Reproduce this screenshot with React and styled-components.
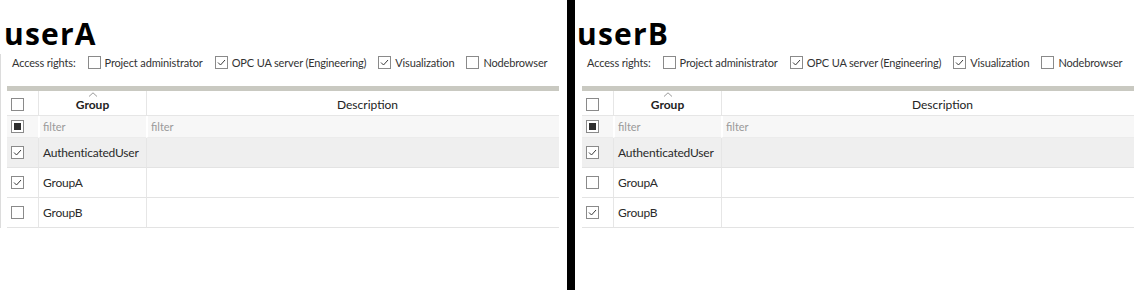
import React from "react";
import styled, { createGlobalStyle } from "styled-components";

const GlobalStyle = createGlobalStyle`
  html, body { margin: 0; padding: 0; background: #fff; }
  body { font-family: Lato, "Noto Sans", sans-serif; color: #333; }
`;

const Page = styled.div`
  display: flex;
  width: 1140px;
  height: 290px;
  background: #fff;
  overflow: hidden;
`;

const Panel = styled.section`
  flex: 0 0 ${(p) => p.$width}px;
  display: flex;
  flex-direction: column;
  box-sizing: border-box;
  min-width: 0;
`;

const Divider = styled.div`
  flex: 0 0 8px;
  background: #000;
`;

const Title = styled.h1`
  margin: 19px 0 0 ${(p) => p.$indent}px;
  height: 30px;
  font-family: "Open Sans", "Noto Sans", sans-serif;
  font-weight: 700;
  font-size: 30px;
  line-height: 30px;
  color: #000;
  letter-spacing: 1.2px;
  white-space: nowrap;
`;

const Body = styled.div`
  margin-top: 5px;
  padding-left: 6px;
  height: 174px;
  border-left: ${(p) => (p.$edge ? "1px solid #dcdcdc" : "none")};
  margin-left: ${(p) => (p.$edge ? 0 : 1)}px;
`;

const AccessRow = styled.div`
  display: flex;
  align-items: center;
  height: 17px;
  padding-left: 5px;
  font-size: 11px;
  letter-spacing: -0.15px;
  color: #333;
  white-space: nowrap;
`;

const AccessLabel = styled.span`
  margin-right: 12px;
  flex: 0 0 auto;
`;

const Option = styled.label`
  display: flex;
  align-items: center;
  gap: 4px;
  margin-right: 12px;
  flex: 0 0 auto;
  white-space: nowrap;
`;

const Box = styled.span`
  position: relative;
  display: inline-flex;
  align-items: center;
  justify-content: center;
  width: 13px;
  height: 13px;
  box-sizing: border-box;
  border: 1px solid #8a8a8a;
  background: #fff;
  flex: 0 0 auto;
`;

const Indeterminate = styled.span`
  width: 7px;
  height: 7px;
  background: #2e2e2e;
`;

function Checkbox({ state }) {
  return (
    <Box>
      {state === "checked" && (
        <svg width="11" height="11" viewBox="0 0 11 11">
          <polyline points="2,5.5 4.5,8 9,3" fill="none" stroke="#3a3a3a" strokeWidth="1" />
        </svg>
      )}
      {state === "mixed" && <Indeterminate />}
    </Box>
  );
}

const Table = styled.div`
  margin-top: 15px;
  width: 552px;
  border-top: 5px solid #c9c9c1;
  display: grid;
  grid-template-columns: 31px 108px 1fr;
  font-size: 12px;
`;

const HeadCell = styled.div`
  position: relative;
  height: 25px;
  box-sizing: border-box;
  display: flex;
  align-items: center;
  justify-content: ${(p) => (p.$center ? "center" : "flex-start")};
  padding-left: ${(p) => p.$pl || 0}px;
  border-bottom: 1px solid #e6e6e6;
  border-left: ${(p) => (p.$first ? "none" : "1px solid #e6e6e6")};
  font-weight: ${(p) => (p.$bold ? 700 : 400)};
  color: #222;
  padding-top: 3px;
  line-height: 14px;
  white-space: nowrap;
`;

const SortCaret = styled.svg`
  position: absolute;
  top: 1px;
  left: 50%;
  transform: translateX(-50%);
`;

const FilterCell = styled.div`
  height: 22px;
  box-sizing: border-box;
  display: flex;
  align-items: center;
  padding-left: ${(p) => p.$pl || 0}px;
  background: #f7f7f7;
  border-left: ${(p) => (p.$first ? "none" : "2px solid #fff")};
  border-bottom: 1px solid #ececec;
  color: #9a9a9a;
  font-size: 11px;
`;

const Cell = styled.div`
  height: 30px;
  box-sizing: border-box;
  display: flex;
  align-items: center;
  padding-left: ${(p) => p.$pl || 0}px;
  background: ${(p) => (p.$shaded ? "#efefef" : "#fff")};
  border-bottom: 1px solid #e3e3e3;
  border-left: ${(p) => (p.$first ? "none" : "1px solid #e6e6e6")};
  color: #2a2a2a;
  letter-spacing: -0.2px;
  white-space: nowrap;
`;

const accessOptions = [
  { label: "Project administrator", state: "none" },
  { label: "OPC UA server (Engineering)", state: "checked" },
  { label: "Visualization", state: "checked" },
  { label: "Nodebrowser", state: "none" },
];

function UserPanel({ name, width, edge, indent, groups }) {
  return (
    <Panel $width={width}>
      <Title $indent={indent}>{name}</Title>
      <Body $edge={edge}>
        <AccessRow>
          <AccessLabel>Access rights:</AccessLabel>
          {accessOptions.map((o) => (
            <Option key={o.label}>
              <Checkbox state={o.state} />
              {o.label}
            </Option>
          ))}
        </AccessRow>
        <Table>
          <HeadCell $first $pl={4}>
            <Checkbox state="none" />
          </HeadCell>
          <HeadCell $center $bold>
            <SortCaret width="9" height="5" viewBox="0 0 9 5">
              <polyline points="0.5,4.5 4.5,0.8 8.5,4.5" fill="none" stroke="#9a9a9a" strokeWidth="1" />
            </SortCaret>
            Group
          </HeadCell>
          <HeadCell $center $pl={29}>Description</HeadCell>

          <FilterCell $first $pl={4}>
            <Checkbox state="mixed" />
          </FilterCell>
          <FilterCell $pl={3}>filter</FilterCell>
          <FilterCell $pl={3}>filter</FilterCell>

          {groups.map((g, i) => (
            <React.Fragment key={g.name}>
              <Cell $first $pl={4} $shaded={i === 0}>
                <Checkbox state={g.checked ? "checked" : "none"} />
              </Cell>
              <Cell $pl={4} $shaded={i === 0}>{g.name}</Cell>
              <Cell $shaded={i === 0} />
            </React.Fragment>
          ))}
        </Table>
      </Body>
    </Panel>
  );
}

export default function App() {
  return (
    <Page>
      <GlobalStyle />
      <UserPanel
        name="userA"
        width={567}
        edge
        indent={4}
        groups={[
          { name: "AuthenticatedUser", checked: true },
          { name: "GroupA", checked: true },
          { name: "GroupB", checked: false },
        ]}
      />
      <Divider />
      <UserPanel
        name="userB"
        width={565}
        indent={2}
        groups={[
          { name: "AuthenticatedUser", checked: true },
          { name: "GroupA", checked: false },
          { name: "GroupB", checked: true },
        ]}
      />
    </Page>
  );
}
